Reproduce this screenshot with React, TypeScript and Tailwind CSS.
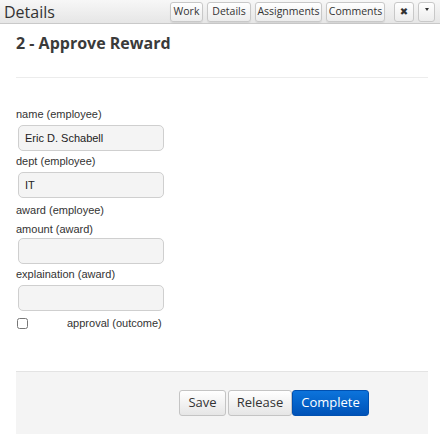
import React from "react";

const ui = { fontFamily: '"Open Sans", "DejaVu Sans", sans-serif' };
const helv = { fontFamily: '"Liberation Sans", Arial, sans-serif' };

const TabButton: React.FC<{ label: string; w: string }> = ({ label, w }) => (
  <button
    className={`${w} h-[20px] text-[10.5px] leading-none text-[#333] border border-[#c8c8c8] rounded-[3px] bg-gradient-to-b from-white to-[#ececec] shadow-[0_1px_1px_rgba(0,0,0,0.08)]`}
  >
    {label}
  </button>
);

const Field: React.FC<{ label: string; value?: string; mb?: string }> = ({ label, value, mb = "mb-[4px]" }) => (
  <div className="flex flex-col">
    <label className={`text-[11px] text-[#333] leading-[13px] ${mb}`}>{label}</label>
    <div className="ml-[2px] w-[146px] h-[26px] rounded-[5px] border border-[#cfcfcf] bg-[#f4f4f4] px-[6px] flex items-center text-[11px] text-[#222]">
      {value}
    </div>
  </div>
);

export default function App() {
  return (
    <div className="w-[440px] h-[443px] bg-white" style={helv}>
      {/* header bar */}
      <div
        className="h-[24px] flex items-center justify-between pl-[4px] pr-[5px] border-b border-[#c9c9c9] bg-gradient-to-b from-[#f7f7f7] to-[#e6e6e6]"
        style={ui}
      >
        <span className="text-[16px] text-[#333] leading-none">Details</span>
        <div className="flex items-center gap-[4px]">
          <TabButton label="Work" w="w-[33px]" />
          <TabButton label="Details" w="w-[44px]" />
          <TabButton label="Assignments" w="w-[67px]" />
          <TabButton label="Comments" w="w-[59px]" />
          <div className="w-[1px]" />
          <button className="w-[20px] h-[20px] flex items-center justify-center text-[10px] font-bold text-[#333] border border-[#c8c8c8] rounded-[3px] bg-gradient-to-b from-white to-[#ececec]">
            ✖
          </button>
          <button className="w-[17px] h-[20px] flex items-center justify-center border border-[#c8c8c8] rounded-[3px] bg-gradient-to-b from-white to-[#ececec]">
            <span className="block w-0 h-0 border-l-[2.5px] border-r-[2.5px] border-t-[3px] border-l-transparent border-r-transparent border-t-[#333] -mt-[4px]" />
          </button>
        </div>
      </div>

      <div className="pl-[16px] pr-[12px]">
        <h2 className="pt-[9px] text-[16px] font-bold text-[#3a3a3a] leading-[20px]" style={ui}>
          2 - Approve Reward
        </h2>
        <div className="mt-[24px] border-t border-[#ececec]" />

        <div className="mt-[30px] flex flex-col gap-[4px]">
          <Field label="name (employee)" value="Eric D. Schabell" />
          <Field label="dept (employee)" value="IT" />
          <div className="text-[11px] text-[#333] leading-[13px] mt-[2px] mb-[2px]">award (employee)</div>
          <Field label="amount (award)" mb="mb-[2px]" />
          <Field label="explaination (award)" />
          <div className="flex items-center">
            <input type="checkbox" className="w-[11px] h-[11px] ml-[1px]" />
            <span className="ml-[39px] text-[11px] text-[#333]">approval (outcome)</span>
          </div>
        </div>

        <div className="mt-[39px] h-[63px] bg-[#f4f4f4] border-t border-[#e3e3e3] flex items-center pl-[163px]">
          <div className="flex" style={ui}>
            <button className="w-[47px] h-[26px] text-[13px] text-[#333] border border-[#c4c4c4] rounded-[3px] bg-gradient-to-b from-white to-[#e6e6e6]">
              Save
            </button>
            <button className="ml-[2px] w-[64px] h-[26px] text-[13px] text-[#333] border border-[#c4c4c4] rounded-[3px] bg-gradient-to-b from-white to-[#e6e6e6]">
              Release
            </button>
            <button className="w-[77px] h-[26px] text-[13px] text-white border border-[#0050b0] rounded-[3px] bg-gradient-to-b from-[#0d74dc] to-[#0052b8]">
              Complete
            </button>
          </div>
        </div>
      </div>
    </div>
  );
}
